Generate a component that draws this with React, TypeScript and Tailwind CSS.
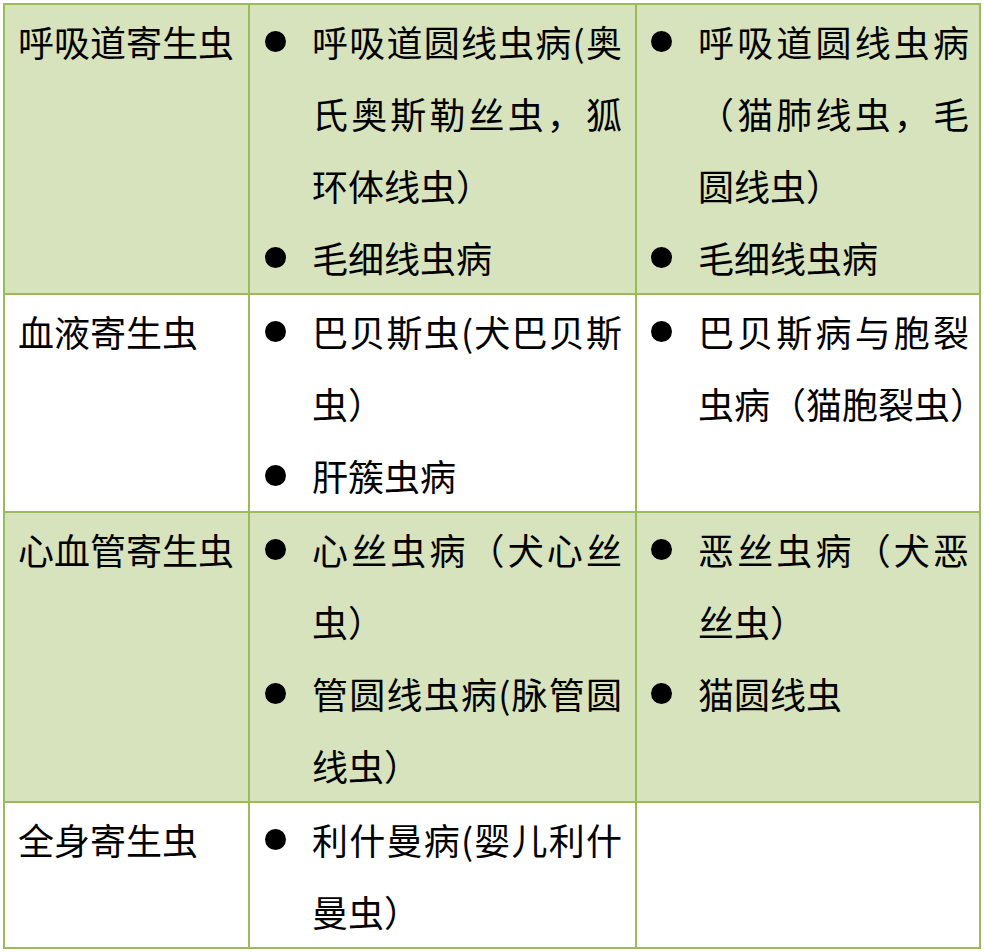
import React from 'react'

type Row = {
  name: string
  green: boolean
  dogs: string[]
  cats: string[]
}

const rows: Row[] = [
  {
    name: '呼吸道寄生虫',
    green: true,
    dogs: ['呼吸道圆线虫病(奥氏奥斯勒丝虫，狐环体线虫）', '毛细线虫病'],
    cats: ['呼吸道圆线虫病（猫肺线虫，毛圆线虫）', '毛细线虫病'],
  },
  {
    name: '血液寄生虫',
    green: false,
    dogs: ['巴贝斯虫(犬巴贝斯虫）', '肝簇虫病'],
    cats: ['巴贝斯病与胞裂虫病（猫胞裂虫）'],
  },
  {
    name: '心血管寄生虫',
    green: true,
    dogs: ['心丝虫病（犬心丝虫）', '管圆线虫病(脉管圆线虫）'],
    cats: ['恶丝虫病（犬恶丝虫）', '猫圆线虫'],
  },
  {
    name: '全身寄生虫',
    green: false,
    dogs: ['利什曼病(婴儿利什曼虫）'],
    cats: [],
  },
]

function Bullets({ items }: { items: string[] }) {
  return (
    <ul>
      {items.map(item => (
        <li key={item} className="flex">
          <span className="w-[47px] h-[72px] shrink-0 flex items-center">
            <span className="block w-[21px] h-[21px] rounded-full bg-black" />
          </span>
          <p className="flex-1 text-justify">{item}</p>
        </li>
      ))}
    </ul>
  )
}

export default function App() {
  return (
    <div className="min-h-screen bg-white pt-[3px] pl-[3px]">
      <div
        className="grid grid-cols-[245px_387px_344px] w-max border-l-2 border-t-2 border-[#9bbb59] text-[36px] leading-[72px] text-black"
        style={{ fontFamily: '"Noto Sans CJK SC", "Noto Sans", sans-serif' }}
      >
        {rows.map(row => {
          const bg = row.green ? 'bg-[#d6e3bc]' : 'bg-white'
          return (
            <React.Fragment key={row.name}>
              <div className={`${bg} border-r-2 border-b-2 border-[#9bbb59] pl-[13px] pr-[8px]`}>
                {row.name}
              </div>
              <div className={`${bg} border-r-2 border-b-2 border-[#9bbb59] pl-[15px] pr-[13px]`}>
                <Bullets items={row.dogs} />
              </div>
              <div className={`${bg} border-r-2 border-b-2 border-[#9bbb59] pl-[14px] pr-[10px]`}>
                <Bullets items={row.cats} />
              </div>
            </React.Fragment>
          )
        })}
      </div>
    </div>
  )
}
